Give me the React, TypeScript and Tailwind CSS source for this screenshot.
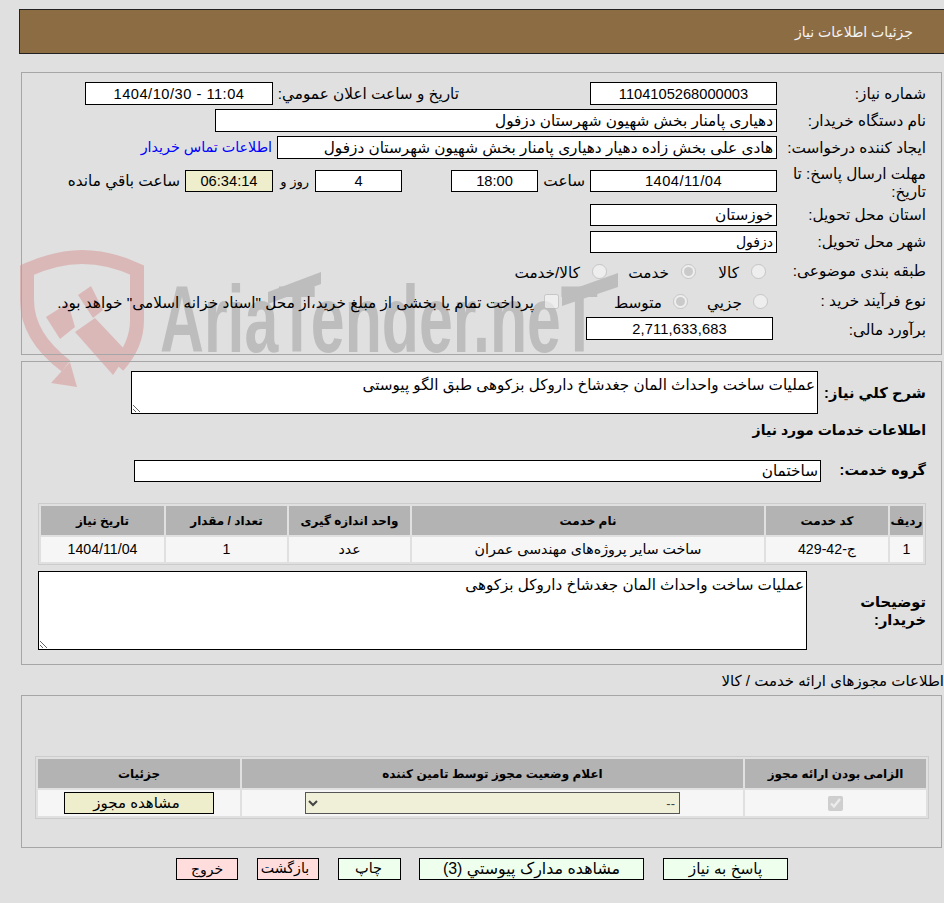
const font = "font-['Liberation_Sans','DejaVu_Sans',sans-serif]";

const Box = ({ className, children }: { className: string; children?: React.ReactNode }) => (
  <div className={`flex items-center border border-black bg-white ${className}`}>{children}</div>
);

const Label = ({ className, children }: { className: string; children: React.ReactNode }) => (
  <div className={`pt-[1px] ${className}`}>{children}</div>
);

const Th = ({ className, children }: { className?: string; children: React.ReactNode }) => (
  <th className={`h-[29px] bg-[#b3b3b3] p-0 text-center text-[12px] font-bold ${className ?? ""}`}>{children}</th>
);

const Td = ({ children }: { children?: React.ReactNode }) => (
  <td className="h-[25px] bg-[#f6f6f6] p-0 text-center text-[14.2px]">{children}</td>
);

const Watermark = () => (
  <svg dir="ltr" className="absolute left-0 top-0" width="944" height="903" viewBox="0 0 944 903">
    <path
      d="M66 366C42 348 27 326 27 300L27 270C45 262 62 257 82 257C102 257 120 262 137 270L137 320C137 340 128 355 118 366"
      fill="none"
      stroke="#dbb8b8"
      strokeWidth="14"
    />
    <polygon points="70,362 77,387 51,383" fill="#dbb8b8" />
    <polygon points="75,332 113,375 128,353 95,318" fill="#dbb8b8" />
    <polygon points="46,317 68,303 75,327 60,339" fill="#dbb8b8" />
    <polygon points="78,295 91,286 103,310 93,318" fill="#dbb8b8" />
    <text
      x="160"
      y="352"
      direction="ltr"
      fill="#bdbdbd"
      fontFamily="Liberation Sans"
      fontWeight="700"
      fontSize="94"
      textLength="438"
      lengthAdjust="spacingAndGlyphs"
    >
      AriaTender.neT
    </text>
    <polygon points="268,292 321,272 321,284 268,304" fill="#bdbdbd" />
    <polygon points="562,293 618,273 618,287 562,306" fill="#bdbdbd" />
  </svg>
);

export default function App() {
  return (
    <div dir="rtl" className={`relative h-[903px] w-[944px] overflow-hidden bg-[#e0e0e0] text-[15.3px] text-black ${font}`}>
      <Watermark />
      <div className="relative flex flex-col pt-[9px]">
        <div className="ml-[19px] flex h-[45px] items-center border border-r-0 border-[#222] bg-[#8c6c43] pr-[31px] pt-[1px] text-[14px] text-[#f4f4f4]">
          جزئیات اطلاعات نیاز
        </div>

        {/* panel 1 */}
        <div className="ml-[21px] mr-[2px] mt-[18px] border border-[#a6a6a6] pb-[14px] pr-[15px] pt-[9px]">
          <div className="flex h-[23px] items-center">
            <Label className="w-[149px]">شماره نیاز:</Label>
            <Box className="h-[23px] w-[187px] justify-center text-[14.67px]">1104105268000003</Box>
            <Label className="mr-[131px] w-[186px]">تاریخ و ساعت اعلان عمومي:</Label>
            <Box className="h-[23px] w-[188px] justify-center text-[14.67px] tracking-[0.5px]">
              <span dir="ltr">1404/10/30 - 11:04</span>
            </Box>
          </div>
          <div className="mt-[4px] flex h-[23px] items-center">
            <Label className="w-[149px]">نام دستگاه خریدار:</Label>
            <Box className="h-[23px] w-[562px] pr-[3px] pt-[1px]">دهیاری پامنار بخش شهیون شهرستان دزفول</Box>
          </div>
          <div className="mt-[4px] flex h-[23px] items-center">
            <Label className="w-[149px]">ایجاد کننده درخواست:</Label>
            <Box className="h-[23px] w-[500px] pr-[3px] pt-[1px]">هادی علی بخش زاده دهیار دهیاری پامنار بخش شهیون شهرستان دزفول</Box>
            <a className="mr-[5px] pt-[1px] text-[14.3px] text-[#0000ff]">اطلاعات تماس خریدار</a>
          </div>
          <div className="mt-[6px] flex h-[34px] items-start">
            <div className="w-[149px] leading-[18px]">
              مهلت ارسال پاسخ: تا
              <br />
              تاریخ:
            </div>
            <Box className="mt-[5px] h-[22px] w-[187px] justify-center text-[14.67px] tracking-[0.5px]">1404/11/04</Box>
            <div className="mr-[5px] mt-[5px] flex h-[22px] w-[47px] items-center pt-[1px]">ساعت</div>
            <Box className="mt-[5px] h-[22px] w-[87px] justify-center text-[14.67px]">18:00</Box>
            <Box className="mr-[49px] mt-[5px] h-[22px] w-[87px] justify-center text-[14.67px]">4</Box>
            <div className="mr-[6px] mt-[5px] flex h-[22px] w-[36px] items-center pt-[1px] text-[13px]">روز و</div>
            <Box className="mt-[5px] h-[22px] w-[88px] justify-center !bg-[#eeeecc] text-[14.67px]">06:34:14</Box>
            <div className="mr-[5px] mt-[5px] flex h-[22px] items-center pt-[1px]">ساعت باقي مانده</div>
          </div>
          <div className="mt-[5px] flex h-[22px] items-center">
            <Label className="w-[149px]">استان محل تحویل:</Label>
            <Box className="h-[22px] w-[187px] pr-[3px]">خوزستان</Box>
          </div>
          <div className="mt-[5px] flex h-[22px] items-center">
            <Label className="w-[149px]">شهر محل تحویل:</Label>
            <Box className="h-[22px] w-[187px] pr-[3px] text-[14px]">دزفول</Box>
          </div>
          <div className="mt-[8px] flex h-[20px] items-center">
            <Label className="w-[160px]">طبقه بندی موضوعی:</Label>
            <div className="flex w-[70px] items-center gap-[12px]">
              <input type="radio" disabled className="m-0 h-[15px] w-[15px]" />
              <span className="pt-[5px]">کالا</span>
            </div>
            <div className="flex w-[89px] items-center gap-[12px]">
              <input type="radio" disabled defaultChecked className="m-0 h-[15px] w-[15px]" />
              <span className="pt-[5px]">خدمت</span>
            </div>
            <div className="flex items-center gap-[12px]">
              <input type="radio" disabled className="m-0 h-[15px] w-[15px]" />
              <span className="pt-[5px]">کالا/خدمت</span>
            </div>
          </div>
          <div className="mt-[10px] flex h-[20px] items-center">
            <Label className="w-[158px]">نوع فرآیند خرید :</Label>
            <div className="flex w-[80px] items-center gap-[11px]">
              <input type="radio" disabled className="m-0 h-[15px] w-[15px]" />
              <span className="pt-[4px]">جزیي</span>
            </div>
            <div className="flex w-[129px] items-center gap-[11px]">
              <input type="radio" disabled defaultChecked className="m-0 h-[15px] w-[15px]" />
              <span className="pt-[4px]">متوسط</span>
            </div>
            <div className="flex items-center gap-[10px]">
              <input type="checkbox" disabled className="m-0 h-[15px] w-[15px]" />
              <span className="pt-[4px]">پرداخت تمام یا بخشی از مبلغ خرید،از محل "اسناد خزانه اسلامی" خواهد بود.</span>
            </div>
          </div>
          <div className="mt-[6px] flex h-[23px] items-center">
            <Label className="w-[153px] pt-[3px]">برآورد مالی:</Label>
            <Box className="h-[23px] w-[187px] justify-center text-[14.67px] tracking-[0.15px]">2,711,633,683</Box>
          </div>
        </div>

        {/* panel 2 */}
        <div className="ml-[21px] mr-[2px] mt-[6px] border border-[#a6a6a6] pb-[14px] pr-[15px] pt-[9px]">
          <div className="flex h-[43px] items-center">
            <div className="w-[108px] text-[14.67px] font-bold">شرح کلي نياز:</div>
            <textarea
              readOnly
              className="h-[43px] w-[687px] border border-black bg-white px-[2px] py-0 text-[15.2px] leading-[26px]"
              value="عملیات ساخت واحداث المان جغدشاخ داروکل بزکوهی طبق الگو پیوستی"
            />
          </div>
          <div className="mt-[5px] flex h-[24px] items-center text-[14.1px] font-bold">اطلاعات خدمات مورد نیاز</div>
          <div className="mt-[17px] flex h-[22px] items-center">
            <div className="w-[105px] text-[14.4px] font-bold">گروه خدمت:</div>
            <Box className="h-[22px] w-[687px] pr-[2px]">ساختمان</Box>
          </div>
          <table className="mt-[21px] w-[888px] table-fixed border-separate border-spacing-[2px] border border-[#cccccc]">
            <thead>
              <tr>
                <Th className="w-[33px]">ردیف</Th>
                <Th className="w-[122px]">کد خدمت</Th>
                <Th className="w-[352px]">نام خدمت</Th>
                <Th className="w-[121px]">واحد اندازه گیری</Th>
                <Th className="w-[121px]">تعداد / مقدار</Th>
                <Th className="w-[123px]">تاریخ نیاز</Th>
              </tr>
            </thead>
            <tbody>
              <tr>
                <Td>1</Td>
                <Td>ج-42-429</Td>
                <Td>ساخت سایر پروژه‌های مهندسی عمران</Td>
                <Td>عدد</Td>
                <Td>1</Td>
                <Td>1404/11/04</Td>
              </tr>
            </tbody>
          </table>
          <div className="mt-[6px] flex h-[79px] items-center">
            <div className="w-[119px] text-[14.67px] font-bold leading-[18px]">
              توضیحات
              <br />
              خریدار:
            </div>
            <textarea
              readOnly
              className="h-[79px] w-[769px] border border-black bg-white px-[2px] py-0 text-[15.2px] leading-[26px]"
              value="عملیات ساخت واحداث المان جغدشاخ داروکل بزکوهی"
            />
          </div>
        </div>

        <div className="mt-[6px] flex h-[20px] items-center text-[15px]">اطلاعات مجوزهای ارائه خدمت / کالا</div>

        {/* panel 3 */}
        <div className="ml-[21px] mr-[2px] mt-[4px] border border-[#a6a6a6] pb-[28px] pr-[12px] pt-[60px]">
          <table className="w-[894px] table-fixed border-separate border-spacing-[2px] border border-[#cccccc]">
            <thead>
              <tr>
                <Th className="w-[181px]">الزامی بودن ارائه مجوز</Th>
                <Th className="w-[501px]">اعلام وضعیت مجوز توسط تامین کننده</Th>
                <Th className="w-[202px]">جزئیات</Th>
              </tr>
            </thead>
            <tbody>
              <tr>
                <td className="h-[26px] bg-[#f6f6f6] p-0 text-center">
                  <input type="checkbox" disabled defaultChecked className="m-0 h-[15px] w-[15px] align-middle" />
                </td>
                <td className="h-[26px] bg-[#f6f6f6] p-0">
                  <select disabled className="mx-auto block h-[22px] w-[375px] border border-[#555555] bg-[#f0f0d8] text-[13px] text-[#444444] opacity-100">
                    <option>--</option>
                  </select>
                </td>
                <td className="h-[26px] bg-[#f6f6f6] p-0">
                  <div className="mx-auto flex h-[22px] w-[150px] items-center justify-center border border-black bg-[#eeeecc] pr-[5px] text-[15px]">
                    مشاهده مجوز
                  </div>
                </td>
              </tr>
            </tbody>
          </table>
        </div>

        {/* buttons */}
        <div className="mr-[156px] mt-[10px] flex h-[22px]">
          <div className="flex w-[125px] items-center justify-center border border-black bg-[#eeffee]">پاسخ به نیاز</div>
          <div className="mr-[19px] flex w-[225px] items-center justify-center border border-black bg-[#eeffee] text-[15.9px]">مشاهده مدارک پیوستي (3)</div>
          <div className="mr-[18px] flex w-[63px] items-center justify-center border border-black bg-[#eeffee] pr-[2px] text-[14.5px]">چاپ</div>
          <div className="mr-[19px] flex w-[62px] items-center justify-center border border-black bg-[#ffdddd] pr-[6px] text-[14.2px]">بازگشت</div>
          <div className="mr-[19px] flex w-[62px] items-center justify-center border border-black bg-[#ffdddd] text-[14px]">خروج</div>
        </div>
      </div>
    </div>
  );
}
